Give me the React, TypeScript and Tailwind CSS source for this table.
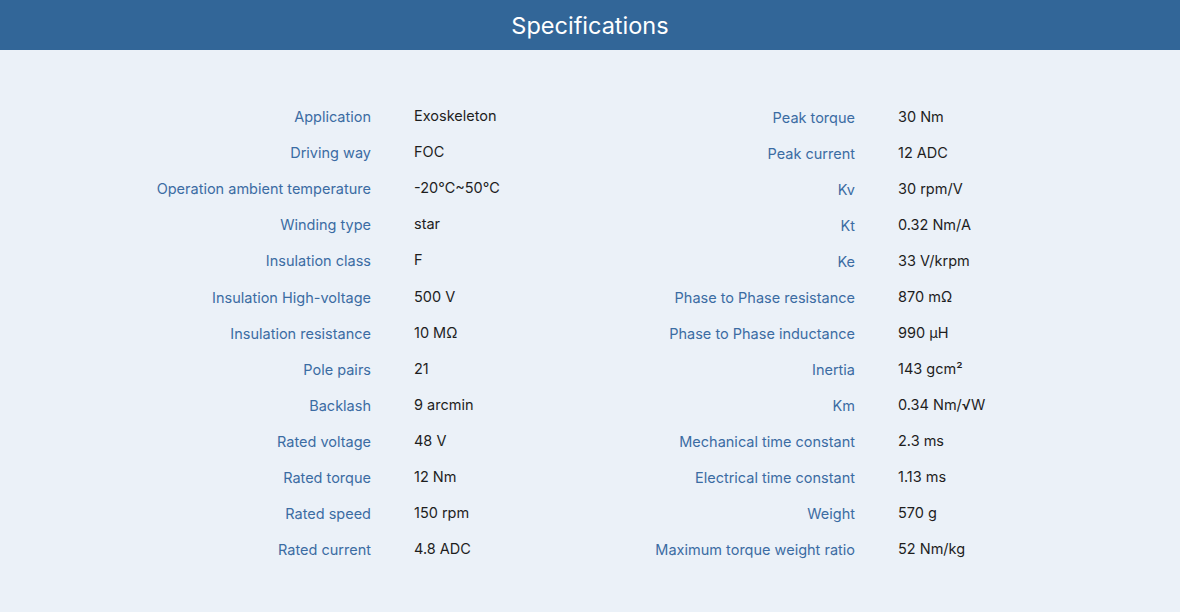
import React from "react";

const left: [string, React.ReactNode][] = [
  ["Application", "Exoskeleton"],
  ["Driving way", "FOC"],
  ["Operation ambient temperature", "-20℃~50℃"],
  ["Winding type", "star"],
  ["Insulation class", "F"],
  ["Insulation High-voltage", "500 V"],
  ["Insulation resistance", "10 MΩ"],
  ["Pole pairs", "21"],
  ["Backlash", "9 arcmin"],
  ["Rated voltage", "48 V"],
  ["Rated torque", "12 Nm"],
  ["Rated speed", "150 rpm"],
  ["Rated current", "4.8 ADC"],
];

const right: [string, React.ReactNode][] = [
  ["Peak torque", "30 Nm"],
  ["Peak current", "12 ADC"],
  ["Kv", "30 rpm/V"],
  ["Kt", "0.32 Nm/A"],
  ["Ke", "33 V/krpm"],
  ["Phase to Phase resistance", "870 mΩ"],
  ["Phase to Phase inductance", "990 µH"],
  ["Inertia", "143 gcm²"],
  ["Km", "0.34 Nm/√W"],
  ["Mechanical time constant", "2.3 ms"],
  ["Electrical time constant", "1.13 ms"],
  ["Weight", "570 g"],
  ["Maximum torque weight ratio", "52 Nm/kg"],
];

function Column({ rows, extra }: { rows: [string, React.ReactNode][]; extra?: string }) {
  return (
    <div className={"grid grid-cols-[240px_201px] gap-x-[43px] w-[484px] " + (extra ?? "")}>
      {rows.map(([k, v]) => (
        <React.Fragment key={k}>
          <div className="h-[36px] flex items-center justify-end text-right text-[#3b6ca3] whitespace-nowrap">{k}</div>
          <div className="h-[36px] flex items-center text-[#1e1e1e] -mt-[1px] whitespace-nowrap">{v}</div>
        </React.Fragment>
      ))}
    </div>
  );
}

export default function App() {
  return (
    <div
      className="w-[1180px] h-[612px] bg-[#ebf1f8] text-[14.5px]"
      style={{ fontFamily: "Inter, 'Noto Sans', sans-serif" }}
    >
      <div className="h-[50px] bg-[#326698] flex items-center justify-center text-white text-[23.5px] pt-[1px]">
        Specifications
      </div>
      <div className="flex pl-[131px] pt-[49px]">
        <Column rows={left} />
        <Column rows={right} extra="pt-[1px]" />
      </div>
    </div>
  );
}
